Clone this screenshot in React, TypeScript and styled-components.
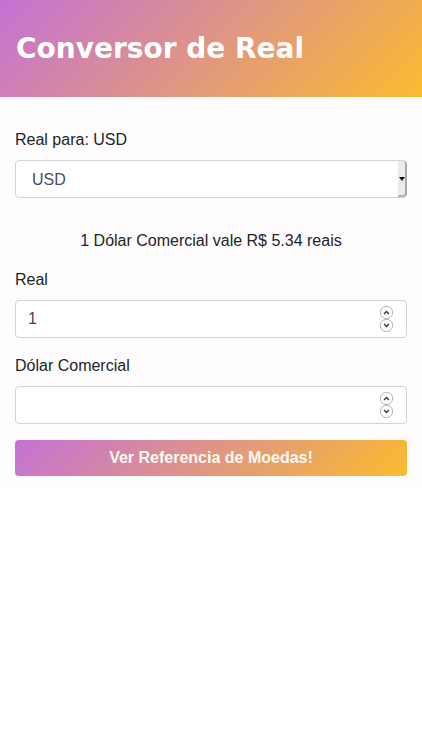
import styled, { createGlobalStyle } from "styled-components";

const GlobalStyle = createGlobalStyle`
  * { box-sizing: border-box; }
  body {
    margin: 0;
    background: #ffffff;
    font-family: "Liberation Sans", Arial, sans-serif;
    color: #212529;
  }
`;

const gradient = "linear-gradient(135deg, #c471d6, #fbbb2f)";

function NumberField({ id, value }: { id: string; value?: number }) {
  return (
    <FieldWrap>
      <Input id={id} type="number" defaultValue={value} />
      <Spin width="13" height="26" viewBox="0 0 13 26" aria-hidden="true">
        <rect x="0.5" y="0.5" width="12" height="12" rx="5.5" fill="#fff" stroke="#b8b4b0" />
        <rect x="0.5" y="13.5" width="12" height="12" rx="5.5" fill="#fff" stroke="#b8b4b0" />
        <path d="M4 8 L6.5 5.5 L9 8" fill="none" stroke="#333" strokeWidth="1.3" />
        <path d="M4 18 L6.5 20.5 L9 18" fill="none" stroke="#333" strokeWidth="1.3" />
      </Spin>
    </FieldWrap>
  );
}

export default function App() {
  return (
    <>
      <GlobalStyle />
      <Header>
        <h1 className="c-header__title">Conversor de Real</h1>
      </Header>
      <Form onSubmit={(e) => e.preventDefault()}>
        <Label htmlFor="moeda">Real para: USD</Label>
        <SelectWrap>
          <Select id="moeda" defaultValue="USD">
            <option value="USD">USD</option>
            <option value="EUR">EUR</option>
            <option value="BTC">BTC</option>
          </Select>
          <SelectArrow />
        </SelectWrap>

        <Rate>1 Dólar Comercial vale R$ 5.34 reais</Rate>

        <Label htmlFor="real">Real</Label>
        <NumberField id="real" value={1} />

        <Label htmlFor="dolar" $top={16}>Dólar Comercial</Label>
        <NumberField id="dolar" />

        <Button type="button">Ver Referencia de Moedas!</Button>
      </Form>
    </>
  );
}

const Header = styled.header`
  height: 97px;
  display: flex;
  align-items: center;
  padding: 0 16px;
  background: ${gradient};

  .c-header__title {
    margin: 0;
    color: #ffffff;
    font-family: "DejaVu Sans", sans-serif;
    font-weight: 700;
    font-size: 28px;
    line-height: 1;
  }
`;

const Form = styled.form`
  display: flex;
  flex-direction: column;
  padding: 31px 15px 14px;
  background: #fffcfd;
`;

const Label = styled.label<{ $top?: number }>`
  display: block;
  font-size: 16px;
  line-height: 24px;
  margin: ${({ $top }) => $top ?? 0}px 0 8px;
  color: #212529;
`;

const SelectWrap = styled.div`
  position: relative;
  height: 38px;
`;

const Select = styled.select`
  appearance: none;
  width: 100%;
  height: 38px;
  padding: 0 16px;
  font-family: "Liberation Sans", Arial, sans-serif;
  font-size: 16px;
  color: #495057;
  background: #ffffff;
  border: 1px solid #ced4da;
  border-radius: 4px;
  outline: none;
`;

const SelectArrow = styled.span`
  position: absolute;
  top: 1px;
  right: 0;
  width: 9px;
  height: 36px;
  background: #ecebea;
  border-right: 2px solid #a9a9a9;
  border-bottom: 2px solid #b5b5b5;
  border-radius: 0 4px 4px 0;
  pointer-events: none;

  &::after {
    content: "";
    position: absolute;
    top: 16px;
    left: 1px;
    border-left: 3px solid transparent;
    border-right: 3px solid transparent;
    border-top: 4px solid #111111;
  }
`;

const Rate = styled.p`
  margin: 31px 0 15px;
  text-align: center;
  font-size: 16px;
  line-height: 24px;
  color: #212529;
`;

const FieldWrap = styled.div`
  position: relative;
  height: 38px;
`;

const Input = styled.input`
  width: 100%;
  height: 38px;
  padding: 0 12px;
  font-family: "Liberation Sans", Arial, sans-serif;
  font-size: 16px;
  color: #5b3d4d;
  background: #ffffff;
  border: 1px solid #ced4da;
  border-radius: 4px;
  outline: none;
  appearance: textfield;

  &::-webkit-inner-spin-button,
  &::-webkit-outer-spin-button {
    -webkit-appearance: none;
    margin: 0;
  }
`;

const Spin = styled.svg`
  position: absolute;
  top: 6px;
  right: 14px;
  pointer-events: none;
`;

const Button = styled.button`
  margin-top: 16px;
  height: 36px;
  border: none;
  border-radius: 4px;
  background: ${gradient};
  color: #fffaf5;
  font-family: "Liberation Sans", Arial, sans-serif;
  font-weight: 700;
  font-size: 16px;
  cursor: pointer;
`;
